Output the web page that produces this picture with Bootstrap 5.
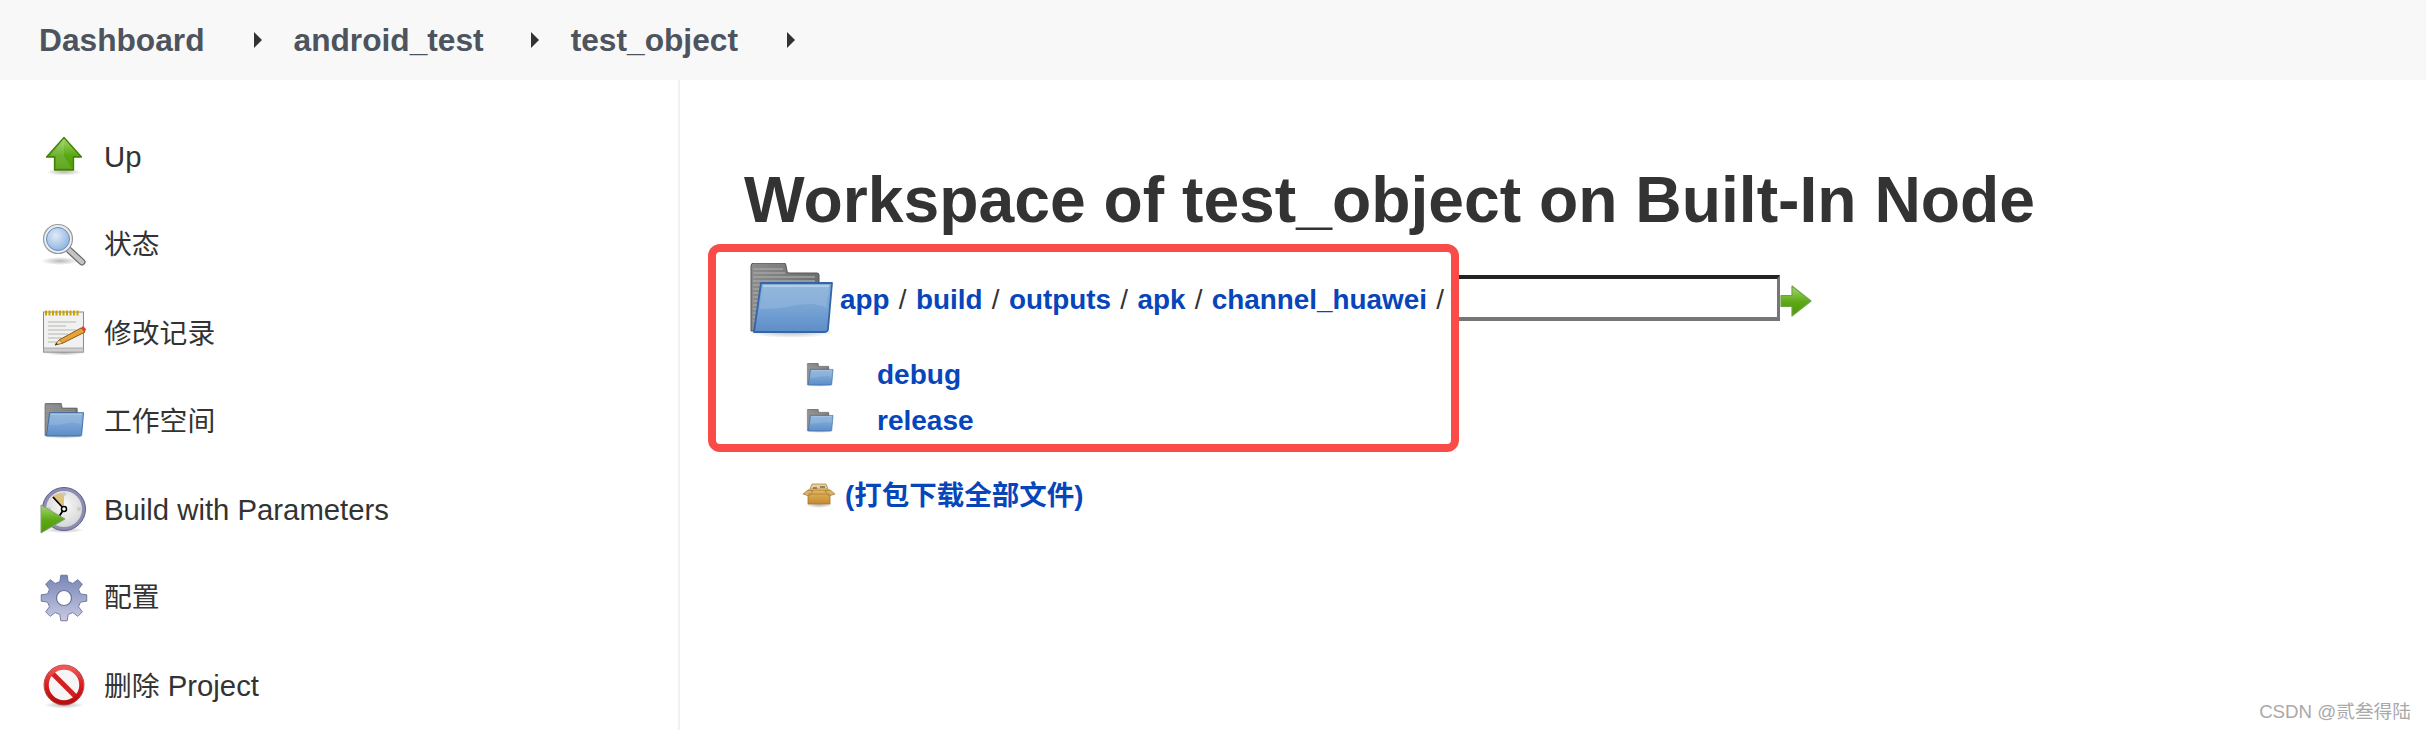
<!DOCTYPE html>
<html lang="zh">
<head>
<meta charset="utf-8">
<title>Workspace of test_object on Built-In Node</title>
<link rel="stylesheet" href="https://cdn.jsdelivr.net/npm/bootstrap@5.3.0/dist/css/bootstrap.min.css">
<style>
html,body{height:730px;overflow:hidden;background:#fff}
body{font-family:"Liberation Sans","Noto Sans CJK SC",Arial,sans-serif;color:#333}
a{text-decoration:none}
.page-shell{position:relative;height:730px;overflow:hidden}
.crumb-bar{height:80px;background:#f8f8f8;padding-left:39px;padding-top:2px}
.crumb-link{font-size:31.7px;font-weight:700;color:#4d545d;line-height:1}
.crumb-sep{width:0;height:0;border-left:8px solid #333;border-top:8px solid transparent;border-bottom:8px solid transparent;margin:-2px 32px 0 49px}
.crumb-sep.tight-sep{margin-left:47px;margin-right:32px}
.body-wrap{height:650px}
.side-nav{width:680px;flex:none;border-right:2px solid #f1f1f1;padding:33px 0 0 40px;height:650px}
.side-item{height:88.2px;font-size:29.3px;color:#333;gap:17px;line-height:1}
.side-item svg{width:48px;height:48px;flex:none}
.side-item span{margin-left:-1px}
.side-item .cjk-part{font-size:27.8px;margin-left:-1px}
.side-item span .cjk-part{margin-left:0}
.main-pane{padding-left:64px;min-width:0}
.ws-title{font-size:64.25px;font-weight:700;color:#333;line-height:1;margin:88px 0 0;white-space:nowrap}
.path-row{margin-top:31px;height:75px;padding-left:3px;width:1068px}
.path-row .big-folder{width:88px;height:75px;flex:none}
.path-text{font-size:27.85px;word-spacing:1.6px;font-weight:700;color:#333;margin-left:5px;line-height:1;white-space:nowrap;margin-top:-1px}
.path-text a,.file-link{color:#0645ba;font-weight:700}
.path-text .slash{font-weight:400}
.ws-input{width:328px;height:46px;flex:none;border-style:solid;border-width:4px 3px 4px 0;border-color:#222 #767676 #767676 #222;background:#fff;margin-left:auto;margin-top:-5px;padding:0;border-radius:0}
.go-arrow{width:32px;height:32px;flex:none}
.file-row{height:46px;font-size:28px;padding-left:62px;line-height:1}
.file-list{margin-top:14px}
.file-row svg{width:28px;height:24px;flex:none;margin-right:43px}
.zip-row{margin-top:36px;padding-left:59px;height:30px}
.zip-row svg{width:32px;height:26px;flex:none;margin-right:10px}
.zip-row a{font-size:27.5px;color:#0645ba;font-weight:700;line-height:1}
.note-frame{position:absolute;left:708px;top:244px;width:751px;height:208px;border:8px solid #f94c49;border-radius:12px;pointer-events:none}
.mark-text{position:absolute;right:15px;top:701px;font-size:18.7px;line-height:22px;color:#a9a9a9;font-family:"Liberation Sans","Noto Sans CJK SC",sans-serif}
</style>
</head>
<body>
<svg width="0" height="0" class="d-block" style="position:absolute" aria-hidden="true">
<defs>
<linearGradient id="gGreen" x1="0" y1="0" x2="0" y2="1"><stop offset="0" stop-color="#a5d86a"/><stop offset=".55" stop-color="#5aa814"/><stop offset="1" stop-color="#4e9a06"/></linearGradient>
<linearGradient id="gBlue" x1="0" y1="0" x2="0" y2="1"><stop offset="0" stop-color="#86afd8"/><stop offset=".5" stop-color="#78a4d4"/><stop offset="1" stop-color="#5d8dc9"/></linearGradient>
<linearGradient id="gGrey" x1="0" y1="0" x2="1" y2="0"><stop offset="0" stop-color="#8b8b8b"/><stop offset="1" stop-color="#6d6d6d"/></linearGradient>
<radialGradient id="gShadow"><stop offset="0" stop-color="#000" stop-opacity=".28"/><stop offset="1" stop-color="#000" stop-opacity="0"/></radialGradient>
<radialGradient id="gLens" cx=".4" cy=".35" r=".75"><stop offset="0" stop-color="#dfeaf7"/><stop offset="1" stop-color="#88aedc"/></radialGradient>
<linearGradient id="gGear" x1="0" y1="0" x2="0" y2="1"><stop offset="0" stop-color="#7686b5"/><stop offset="1" stop-color="#c9c9e2"/></linearGradient>
<linearGradient id="gBox" x1="0" y1="0" x2="0" y2="1"><stop offset="0" stop-color="#e4b765"/><stop offset="1" stop-color="#c58a2e"/></linearGradient>
<linearGradient id="gRing" x1="0" y1="0" x2="0" y2="1"><stop offset="0" stop-color="#ef5a5a"/><stop offset=".5" stop-color="#d91c1c"/><stop offset="1" stop-color="#b80f0f"/></linearGradient>
<radialGradient id="gFace" cx=".5" cy=".4" r=".7"><stop offset="0" stop-color="#fafafa"/><stop offset="1" stop-color="#d0d0d0"/></radialGradient>
<symbol id="icoFolder" viewBox="0 0 88 75">
<ellipse cx="44" cy="69" rx="44" ry="6" fill="url(#gShadow)"/>
<path d="M4 68V3q0-3 3-3h30q2 0 2 3l1 5q0 2 2 2h28q2 0 2 2v56z" fill="url(#gGrey)" stroke="#555" stroke-width="1"/>
<path d="M6 6h30M6 10h32M6 14h62M6 18h62M6 22h8M6 26h7M6 30h6M6 34h6M6 38h5M6 42h5M6 46h5M6 50h4M6 54h4M6 58h4" stroke="#a4a4a4" stroke-width="1.4" fill="none"/>
<path d="M14 20H85L81 66q-.3 3-3 3H7z" fill="url(#gBlue)" stroke="#3465a4" stroke-width="1.8" stroke-linejoin="round"/>
<path d="M16 23H82l-2.500 22C60 35 44 47 12.500 46z" fill="#fff" opacity=".12"/>
<path d="M16 23H82" stroke="#c3d6ec" stroke-width="1.500"/>
</symbol>
<symbol id="icoBox" viewBox="0 0 32 26">
<ellipse cx="16" cy="23" rx="14" ry="3" fill="url(#gShadow)"/>
<path d="M5 8H27V22H5z" fill="url(#gBox)" stroke="#a3762a" stroke-width=".8"/>
<path d="M5 8L0 12 6 14 10 9zM27 8L32 12 26 14 22 9z" fill="#d9b26c" stroke="#a3762a" stroke-width=".7"/>
<path d="M7 7L9 2H23L25 7z" fill="#e9cf9c" stroke="#a3762a" stroke-width=".7"/>
<path d="M10 6h4M17 5h5" stroke="#7a6a55" stroke-width="1.500"/>
<path d="M5 12H27" stroke="#b27f2d" stroke-width=".8"/>
</symbol>
</defs>
</svg>

<div class="page-shell">
  <nav class="crumb-bar d-flex align-items-center">
    <a class="crumb-link" href="#">Dashboard</a><span class="crumb-sep"></span>
    <a class="crumb-link" href="#">android_test</a><span class="crumb-sep tight-sep"></span>
    <a class="crumb-link" href="#">test_object</a><span class="crumb-sep"></span>
  </nav>
  <div class="body-wrap d-flex">
    <aside class="side-nav">
      <div class="side-item d-flex align-items-center">
        <svg viewBox="0 0 48 48"><ellipse cx="24" cy="39" rx="18" ry="3.500" fill="url(#gShadow)"/><path d="M24 4.500L6.500 24H14.500V37H33.500V24H41.500z" fill="url(#gGreen)" stroke="#3f7f06" stroke-width="1.300" stroke-linejoin="round"/><path d="M16 35.500V23H10L24 7.500 24 23 32 35.500z" fill="#fff" opacity=".12"/></svg>
        <span>Up</span>
      </div>
      <div class="side-item d-flex align-items-center">
        <svg viewBox="0 0 48 48"><ellipse cx="20" cy="40" rx="19" ry="4" fill="url(#gShadow)"/><path d="M29 29L42 41" stroke="#666" stroke-width="7" stroke-linecap="round"/><path d="M29 29L42 41" stroke="#c4c4c4" stroke-width="4.500" stroke-linecap="round"/><circle cx="18" cy="18" r="14.500" fill="#ededed" stroke="#9a9a9a" stroke-width="1.200"/><circle cx="18" cy="18" r="11.500" fill="url(#gLens)" stroke="#5f8fc8" stroke-width="1"/></svg>
        <span class="cjk-part">状态</span>
      </div>
      <div class="side-item d-flex align-items-center">
        <svg viewBox="0 0 48 48"><ellipse cx="24" cy="44" rx="20" ry="2.500" fill="url(#gShadow)"/><rect x="3.500" y="3" width="40" height="40" fill="#f1f1f1" stroke="#8a8a8a"/><rect x="3.500" y="39" width="40" height="4" fill="#cfcfcf" stroke="#8a8a8a" stroke-width=".6"/><path d="M6 1.500v5M9.500 1.500v5M13 1.500v5M16.500 1.500v5M20 1.500v5M23.500 1.500v5M27 1.500v5M30.500 1.500v5M34 1.500v5M37.500 1.500v5" stroke="#c9a400" stroke-width="2"/><path d="M8 13H36M8 17H26M8 21H36M8 25H28M8 29H22M8 33H18" stroke="#b5b5b0" stroke-width="1"/><path d="M15 36L19 31 41 19 45 23 23 34z" fill="#e8a33a" stroke="#8a5a14" stroke-width="1"/><path d="M41 19L45 23 46 20 43 17z" fill="#d9433d"/><path d="M15 36L19 31 23 34z" fill="#f2d6a2" stroke="#8a5a14" stroke-width=".6"/><path d="M15 36L16.500 34 18 35.200z" fill="#222"/></svg>
        <span class="cjk-part">修改记录</span>
      </div>
      <div class="side-item d-flex align-items-center">
        <svg viewBox="0 0 48 48"><use href="#icoFolder" x="3" y="5" width="42" height="36"/></svg>
        <span class="cjk-part">工作空间</span>
      </div>
      <div class="side-item d-flex align-items-center">
        <svg viewBox="0 0 48 48"><ellipse cx="24" cy="44" rx="20" ry="3" fill="url(#gShadow)"/><circle cx="24" cy="23" r="21.500" fill="#8d8cb3" stroke="#5f5e85"/><circle cx="24" cy="23" r="18" fill="url(#gFace)"/><path d="M24 23L24 7A16 16 0 0 0 12 11z" fill="#dcc27c"/><circle cx="9" cy="23" r="2" fill="#c9c9c9"/><circle cx="39" cy="23" r="2" fill="#c9c9c9"/><circle cx="24" cy="8" r="2" fill="#c9c9c9"/><path d="M24 23L13 11M24 23L18 32" stroke="#000" stroke-width="1.800"/><circle cx="24" cy="23" r="2.500" fill="#fff" stroke="#000" stroke-width="1.500"/><path d="M1 19L25 33 1 47z" fill="url(#gGreen)" stroke="#8a9a80" stroke-width="1"/></svg>
        <span>Build with Parameters</span>
      </div>
      <div class="side-item d-flex align-items-center">
        <svg viewBox="0 0 48 48"><polygon transform="translate(24 24)" fill="url(#gGear)" stroke="#5f6890" stroke-width=".8" stroke-linejoin="round" points="-3.2,-22.78 3.2,-22.78 4.11,-16.5 8.76,-14.57 13.84,-18.37 18.37,-13.84 14.57,-8.76 16.5,-4.11 22.78,-3.2 22.78,3.2 16.5,4.11 14.57,8.76 18.37,13.84 13.84,18.37 8.76,14.57 4.11,16.5 3.2,22.78 -3.2,22.78 -4.11,16.5 -8.76,14.57 -13.84,18.37 -18.37,13.84 -14.57,8.76 -16.5,4.11 -22.78,3.2 -22.78,-3.2 -16.5,-4.11 -14.57,-8.76 -18.37,-13.84 -13.84,-18.37 -8.76,-14.57 -4.11,-16.5"/><circle cx="24" cy="24" r="7.500" fill="#fff" stroke="#6a7398" stroke-width="1.200"/></svg>
        <span class="cjk-part">配置</span>
      </div>
      <div class="side-item d-flex align-items-center">
        <svg viewBox="0 0 48 48"><ellipse cx="24" cy="43" rx="20" ry="3.500" fill="url(#gShadow)"/><circle cx="24" cy="23" r="16" fill="#f6f6f6"/><path d="M12.500 11.500L35.500 34.500" stroke="#d32020" stroke-width="5"/><circle cx="24" cy="23" r="17.500" fill="none" stroke="url(#gRing)" stroke-width="4.500"/><circle cx="24" cy="23" r="20" fill="none" stroke="#a31212" stroke-width=".7"/></svg>
        <span><span class="cjk-part">删除</span> Project</span>
      </div>
    </aside>
    <main class="main-pane flex-grow-1">
      <h1 class="ws-title">Workspace of test_object on Built-In Node</h1>
      <div class="path-row d-flex align-items-center">
        <svg class="big-folder"><use href="#icoFolder" width="88" height="75"/></svg>
        <div class="path-text"><a href="#">app</a> <span class="slash">/</span> <a href="#">build</a> <span class="slash">/</span> <a href="#">outputs</a> <span class="slash">/</span> <a href="#">apk</a> <span class="slash">/</span> <a href="#">channel_huawei</a> <span class="slash">/</span></div>
        <input class="ws-input" type="text" aria-label="path">
        <svg class="go-arrow" viewBox="0 0 32 32"><path d="M1 10.500H12V1L31 16 12 31V21.500H1z" fill="url(#gGreen)" stroke="#6fa24a" stroke-width="1.200" stroke-linejoin="round"/></svg>
      </div>
      <div class="file-list">
        <div class="file-row d-flex align-items-center"><svg><use href="#icoFolder" width="28" height="24"/></svg><a class="file-link" href="#">debug</a></div>
        <div class="file-row d-flex align-items-center"><svg><use href="#icoFolder" width="28" height="24"/></svg><a class="file-link" href="#">release</a></div>
      </div>
      <div class="zip-row d-flex align-items-center"><svg><use href="#icoBox" width="32" height="26"/></svg><a href="#">(打包下载全部文件)</a></div>
    </main>
  </div>
  <div class="note-frame"></div>
  <div class="mark-text">CSDN @贰叁得陆</div>
</div>
<script src="https://cdn.jsdelivr.net/npm/bootstrap@5.3.0/dist/js/bootstrap.bundle.min.js"></script>
</body>
</html>
